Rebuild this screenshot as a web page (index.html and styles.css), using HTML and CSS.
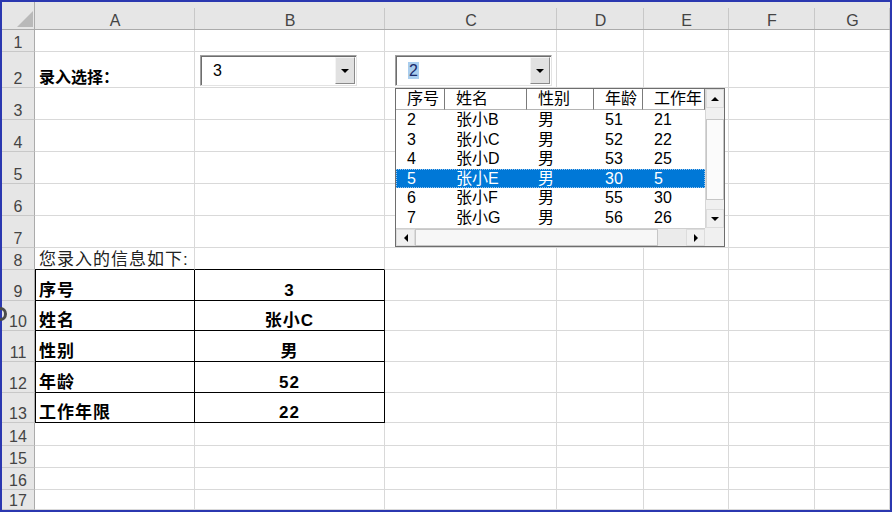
FILE: index.html
```html
<!DOCTYPE html>
<html>
<head>
<meta charset="utf-8">
<title>Sheet</title>
<link rel="stylesheet" href="styles.css">
</head>
<body>
<div class="page">
  <div class="frame">
    <div class="sheet">
      <div class="corner"><span class="tri"></span></div>
      <div class="ch">A</div><div class="ch">B</div><div class="ch">C</div><div class="ch">D</div><div class="ch">E</div><div class="ch">F</div><div class="ch">G</div>

      <div class="rh">1</div><div class="c"></div><div class="c"></div><div class="c"></div><div class="c"></div><div class="c"></div><div class="c"></div><div class="c"></div>
      <div class="rh">2</div><div class="c lbl">录入选择：</div><div class="c"></div><div class="c"></div><div class="c"></div><div class="c"></div><div class="c"></div><div class="c"></div>
      <div class="rh">3</div><div class="c"></div><div class="c"></div><div class="c"></div><div class="c"></div><div class="c"></div><div class="c"></div><div class="c"></div>
      <div class="rh">4</div><div class="c"></div><div class="c"></div><div class="c"></div><div class="c"></div><div class="c"></div><div class="c"></div><div class="c"></div>
      <div class="rh">5</div><div class="c"></div><div class="c"></div><div class="c"></div><div class="c"></div><div class="c"></div><div class="c"></div><div class="c"></div>
      <div class="rh">6</div><div class="c"></div><div class="c"></div><div class="c"></div><div class="c"></div><div class="c"></div><div class="c"></div><div class="c"></div>
      <div class="rh">7</div><div class="c"></div><div class="c"></div><div class="c"></div><div class="c"></div><div class="c"></div><div class="c"></div><div class="c"></div>
      <div class="rh">8</div><div class="c note top">您录入的信息如下:</div><div class="c top"></div><div class="c"></div><div class="c"></div><div class="c"></div><div class="c"></div><div class="c"></div>
      <div class="rh">9</div><div class="c ta">序号</div><div class="c tb">3</div><div class="c"></div><div class="c"></div><div class="c"></div><div class="c"></div><div class="c"></div>
      <div class="rh">10</div><div class="c ta">姓名</div><div class="c tb">张小C</div><div class="c"></div><div class="c"></div><div class="c"></div><div class="c"></div><div class="c"></div>
      <div class="rh">11</div><div class="c ta">性别</div><div class="c tb">男</div><div class="c"></div><div class="c"></div><div class="c"></div><div class="c"></div><div class="c"></div>
      <div class="rh">12</div><div class="c ta">年龄</div><div class="c tb">52</div><div class="c"></div><div class="c"></div><div class="c"></div><div class="c"></div><div class="c"></div>
      <div class="rh">13</div><div class="c ta">工作年限</div><div class="c tb">22</div><div class="c"></div><div class="c"></div><div class="c"></div><div class="c"></div><div class="c"></div>
      <div class="rh">14</div><div class="c"></div><div class="c"></div><div class="c"></div><div class="c"></div><div class="c"></div><div class="c"></div><div class="c"></div>
      <div class="rh">15</div><div class="c"></div><div class="c"></div><div class="c"></div><div class="c"></div><div class="c"></div><div class="c"></div><div class="c"></div>
      <div class="rh">16</div><div class="c"></div><div class="c"></div><div class="c"></div><div class="c"></div><div class="c"></div><div class="c"></div><div class="c"></div>
      <div class="rh">17</div><div class="c"></div><div class="c"></div><div class="c"></div><div class="c"></div><div class="c"></div><div class="c"></div><div class="c"></div>
    </div>

    <div class="combo combo1">
      <span class="val">3</span>
      <span class="dbtn"><svg width="8" height="4" viewBox="0 0 8 4"><polygon points="0,0 8,0 4,4" fill="#000"/></svg></span>
    </div>

    <div class="combo combo2">
      <span class="val"><span class="hl">2</span></span>
      <span class="dbtn"><svg width="8" height="4" viewBox="0 0 8 4"><polygon points="0,0 8,0 4,4" fill="#000"/></svg></span>
    </div>

    <div class="listbox">
      <div class="lb-main">
        <div class="lb-row lb-head"><span>序号</span><span>姓名</span><span>性别</span><span>年龄</span><span>工作年</span></div>
        <div class="lb-row"><span>2</span><span>张小B</span><span>男</span><span>51</span><span>21</span></div>
        <div class="lb-row"><span>3</span><span>张小C</span><span>男</span><span>52</span><span>22</span></div>
        <div class="lb-row"><span>4</span><span>张小D</span><span>男</span><span>53</span><span>25</span></div>
        <div class="lb-row sel"><span>5</span><span>张小E</span><span>男</span><span>30</span><span>5</span></div>
        <div class="lb-row"><span>6</span><span>张小F</span><span>男</span><span>55</span><span>30</span></div>
        <div class="lb-row"><span>7</span><span>张小G</span><span>男</span><span>56</span><span>26</span></div>
      </div>
      <div class="vscroll">
        <div class="sbtn"><svg width="8" height="4" viewBox="0 0 8 4"><polygon points="0,4 8,4 4,0" fill="#000"/></svg></div>
        <div class="vtrack"><div class="vthumb"></div></div>
        <div class="sbtn"><svg width="8" height="4" viewBox="0 0 8 4"><polygon points="0,0 8,0 4,4" fill="#000"/></svg></div>
      </div>
      <div class="hscroll">
        <div class="sbtn"><svg width="4" height="8" viewBox="0 0 4 8"><polygon points="4,0 4,8 0,4" fill="#000"/></svg></div>
        <div class="hthumb"></div>
        <div class="htrack"></div>
        <div class="sbtn"><svg width="4" height="8" viewBox="0 0 4 8"><polygon points="0,0 0,8 4,4" fill="#000"/></svg></div>
      </div>
      <div class="lb-corner"></div>
    </div>
  </div>
  <div class="mark"></div>
</div>
</body>
</html>
```

FILE: styles.css
```css
* { box-sizing: border-box; }
html, body { margin: 0; padding: 0; background: #fff; }
body { font-family: "Liberation Sans", "Noto Sans CJK SC", sans-serif; }

.page { position: relative; width: 892px; height: 512px; overflow: hidden; }
.frame {
  position: relative;
  width: 892px;
  height: 512px;
  border: 2px solid #2b38b0;
  background: #fff;
}

.sheet {
  display: grid;
  grid-template-columns: 33px 160px 190px 172px 87px 85px 86px 75px;
  grid-template-rows: 28px 22px 36px 32px 32px 32px 32px 32px 22px 31px 30px 31px 31px 30px 23px 22px 22px 20px;
}

.corner {
  background: #e6e6e6;
  border-right: 1px solid #ababab;
  border-bottom: 1px solid #ababab;
  display: flex;
  align-items: flex-end;
  justify-content: flex-end;
  padding: 0 1px 2px 0;
}
.tri {
  width: 0; height: 0;
  border-left: 16px solid transparent;
  border-bottom: 16px solid #b9b9b9;
}

.ch {
  position: relative;
  background: #e6e6e6;
  border-bottom: 1px solid #ababab;
  display: flex;
  align-items: flex-end;
  justify-content: center;
  font-size: 16px;
  line-height: 16px;
  color: #444;
}
.ch::after {
  content: "";
  position: absolute;
  right: 0; top: 6px; bottom: 0;
  width: 1px;
  background: #c8c8c8;
}

.rh {
  background: #e6e6e6;
  border-right: 1px solid #ababab;
  border-bottom: 1px solid #c8c8c8;
  display: flex;
  align-items: flex-end;
  justify-content: center;
  font-size: 16px;
  line-height: 16px;
  color: #444;
}

.c {
  border-right: 1px solid #d9d9d9;
  border-bottom: 1px solid #d9d9d9;
  display: flex;
  align-items: flex-end;
  padding: 0 0 0 4px;
  font-size: 17px;
  line-height: 18px;
  letter-spacing: 1px;
  color: #000;
  white-space: nowrap;
}
.lbl { font-size: 16px; font-weight: bold; letter-spacing: 0; line-height: 18px; padding-bottom: 0; }
.note { color: #222; }
.top { border-bottom-color: #000; }
.ta {
  font-weight: bold;
  border-right-color: #000;
  border-bottom-color: #000;
  box-shadow: inset 1px 0 0 #000;
}
.tb {
  font-weight: bold;
  justify-content: center;
  padding-left: 0;
  border-right-color: #000;
  border-bottom-color: #000;
}

/* ActiveX combo boxes */
.combo {
  position: absolute;
  top: 53px;
  width: 157px;
  height: 31px;
  background: #fff;
  border: 1px solid;
  border-color: #a0a0a0 #e3e3e3 #e3e3e3 #a0a0a0;
  box-shadow: inset 1px 1px 0 #6d6d6d;
  display: flex;
  align-items: center;
}
.combo1 { left: 198px; }
.combo2 { left: 393px; }
.val {
  padding-left: 12px;
  font-size: 16px;
  line-height: 18px;
  color: #000;
}
.hl { background: #a9cdee; color: #1b2a6b; padding: 0 1px; }
.dbtn {
  margin-left: auto;
  margin-right: 1px;
  width: 20px;
  height: 27px;
  background: #e1e1e1;
  border: 1px solid;
  border-color: #f4f4f4 #8a8a8a #8a8a8a #f4f4f4;
  display: flex;
  align-items: center;
  justify-content: center;
}

/* list box */
.listbox {
  position: absolute;
  left: 393px;
  top: 86px;
  width: 330px;
  height: 159px;
  border: 1px solid #6e6e6e;
  background: #fff;
  display: grid;
  grid-template-columns: 309px 19px;
  grid-template-rows: 139px 18px;
}
.lb-main { overflow: hidden; font-size: 16px; color: #000; }
.lb-row {
  display: grid;
  grid-template-columns: 49px 82px 67px 49px 62px;
  height: 19.5px;
  line-height: 19.5px;
  white-space: nowrap;
}
.lb-row span { padding-left: 11px; overflow: hidden; }
.lb-head { height: 21px; line-height: 20px; }
.lb-head span {
  border-right: 1px solid #7b7b7b;
  border-bottom: 1px solid #b4b4b4;
}
.sel {
  background: #0078d7;
  color: #fff;
  outline: 1px dotted #9cc6ee;
  outline-offset: -1px;
}

.vscroll {
  display: flex;
  flex-direction: column;
  background: #f0f0f0;
  border-left: 1px solid #d6d6d6;
}
.sbtn {
  flex: 0 0 19px;
  display: flex;
  align-items: center;
  justify-content: center;
  background: #f0f0f0;
  border: 1px solid #dcdcdc;
}
.vtrack { flex: 1; padding-top: 11px; }
.vthumb {
  height: 81px;
  background: #fbfbfb;
  border: 1px solid #c6c6c6;
}

.hscroll {
  display: flex;
  background: #f0f0f0;
  border-top: 1px solid #cfcfcf;
}
.hthumb {
  flex: 0 0 243px;
  background: #f7f7f7;
  border: 1px solid #c6c6c6;
}
.htrack { flex: 1; background: #ebebeb; }
.lb-corner { background: #f0f0f0; }

.mark {
  position: absolute;
  left: -6px;
  top: 307px;
  width: 13px;
  height: 14px;
  border: 3px solid #4a4a4a;
  border-radius: 50%;
}
```
